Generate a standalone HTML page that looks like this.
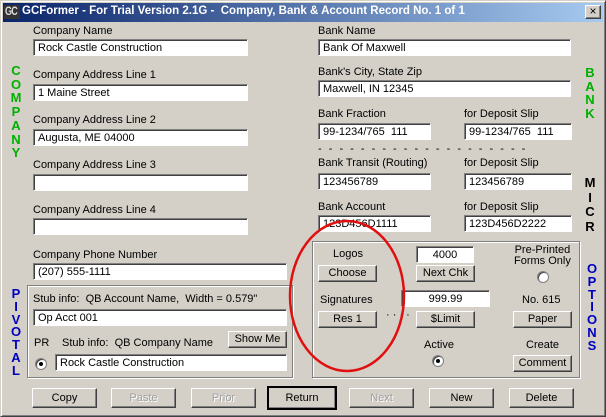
<!DOCTYPE html>
<html><head><style>
*{margin:0;padding:0;box-sizing:border-box}
body{width:606px;height:417px;background:#d4d0c8;font-family:"Liberation Sans",sans-serif;font-size:11px;color:#000;position:relative;overflow:hidden}
.a{position:absolute;white-space:nowrap}
.in{position:absolute;background:#fff;border:1px solid;border-color:#808080 #fff #fff #808080;box-shadow:inset 1px 1px 0 #404040;padding:2px 0 0 4px;font-size:11px;height:17px}
.bt{position:absolute;background:#d4d0c8;border:1px solid;border-color:#fff #404040 #404040 #fff;box-shadow:inset -1px -1px 0 #808080;text-align:center;line-height:14px;font-size:11px}
.dis{color:#a0a0a0;text-shadow:1px 1px 0 #fff}
.g{position:absolute;border:1px solid #808080;box-shadow:1px 1px 0 #fff,inset 1px 1px 0 #fff}
.v{position:absolute;font-weight:bold;font-size:13px;line-height:13px;text-align:center;width:14px}
.rad{position:absolute;width:12px;height:12px;border-radius:50%;background:#fff;border:1px solid #808080;box-shadow:inset 1px 1px 0 #404040}
.dot:after{content:"";position:absolute;left:3px;top:3px;width:4px;height:4px;border-radius:50%;background:#000}
</style></head><body>
<div class="a" style="left:0;top:0;width:606px;height:417px;border:1px solid;border-color:#d4d0c8 #404040 #404040 #d4d0c8;box-shadow:inset 1px 1px 0 #fff,inset -1px -1px 0 #808080"></div>
<div class="a" style="left:3px;top:3px;width:600px;height:19px;background:linear-gradient(90deg,#0a246a,#a6caf0)"></div>
<div class="a" style="left:4px;top:5px;width:16px;height:14px;background:#333"></div>
<div class="a" style="left:5px;top:4px;color:#ddd;font-weight:bold;font-size:12px;letter-spacing:-1px;transform:scaleX(0.75);transform-origin:left">GC</div>
<div class="a" style="left:22px;top:5px;color:#fff;font-weight:bold;font-size:11.5px">GCFormer - For Trial Version 2.1G -&nbsp; Company, Bank &amp; Account Record No. 1 of 1</div>
<div class="bt" style="left:585px;top:5px;width:16px;height:14px;line-height:11px;font-size:12px">×</div>

<div class="a" style="left:33px;top:25px">Company Name</div>
<div class="in" style="left:33px;top:39px;width:215px">Rock Castle Construction</div>
<div class="a" style="left:33px;top:69px">Company Address Line 1</div>
<div class="in" style="left:33px;top:84px;width:215px">1 Maine Street</div>
<div class="a" style="left:33px;top:114px">Company Address Line 2</div>
<div class="in" style="left:33px;top:129px;width:215px">Augusta, ME 04000</div>
<div class="a" style="left:33px;top:159px">Company Address Line 3</div>
<div class="in" style="left:33px;top:174px;width:215px"></div>
<div class="a" style="left:33px;top:204px">Company Address Line 4</div>
<div class="in" style="left:33px;top:218px;width:215px"></div>
<div class="a" style="left:33px;top:249px">Company Phone Number</div>
<div class="in" style="left:33px;top:263px;width:254px">(207) 555-1111</div>

<div class="v" style="left:9px;top:64px;color:#00b000;line-height:13.7px">C<br>O<br>M<br>P<br>A<br>N<br>Y</div>
<div class="v" style="left:9px;top:288px;color:#0000c0;line-height:12.8px">P<br>I<br>V<br>O<br>T<br>A<br>L</div>

<div class="g" style="left:27px;top:285px;width:266px;height:93px"></div>
<div class="a" style="left:33px;top:293px">Stub info:&nbsp; QB Account Name,&nbsp; Width = 0.579"</div>
<div class="in" style="left:33px;top:309px;width:254px">Op Acct 001</div>
<div class="a" style="left:34px;top:337px">PR</div>
<div class="a" style="left:62px;top:337px">Stub info:&nbsp; QB Company Name</div>
<div class="bt" style="left:228px;top:331px;width:59px;height:17px">Show Me</div>
<div class="rad dot" style="left:35px;top:358px"></div>
<div class="in" style="left:55px;top:354px;width:232px">Rock Castle Construction</div>

<div class="a" style="left:318px;top:25px">Bank Name</div>
<div class="in" style="left:318px;top:39px;width:253px">Bank Of Maxwell</div>
<div class="a" style="left:318px;top:66px">Bank's City, State Zip</div>
<div class="in" style="left:318px;top:80px;width:253px">Maxwell, IN 12345</div>
<div class="a" style="left:318px;top:108px">Bank Fraction</div>
<div class="a" style="left:464px;top:108px">for Deposit Slip</div>
<div class="in" style="left:318px;top:123px;width:113px">99-1234/765&nbsp; 111</div>
<div class="in" style="left:464px;top:123px;width:108px">99-1234/765&nbsp; 111</div>
<div class="a" style="left:318px;top:143px;letter-spacing:2px">- - - - - - - - - - - - - - - - - - - -</div>
<div class="a" style="left:318px;top:157px">Bank Transit (Routing)</div>
<div class="a" style="left:464px;top:157px">for Deposit Slip</div>
<div class="in" style="left:318px;top:173px;width:113px">123456789</div>
<div class="in" style="left:464px;top:173px;width:108px">123456789</div>
<div class="a" style="left:318px;top:201px">Bank Account</div>
<div class="a" style="left:464px;top:201px">for Deposit Slip</div>
<div class="in" style="left:318px;top:215px;width:113px">123D456D1111</div>
<div class="in" style="left:464px;top:215px;width:108px">123D456D2222</div>

<div class="v" style="left:583px;top:66px;color:#00b000;line-height:13.5px">B<br>A<br>N<br>K</div>
<div class="v" style="left:583px;top:176px;color:#000;line-height:14.5px">M<br>I<br>C<br>R</div>
<div class="v" style="left:585px;top:263px;color:#0000c0;line-height:12.8px">O<br>P<br>T<br>I<br>O<br>N<br>S</div>

<div class="g" style="left:312px;top:241px;width:268px;height:137px"></div>
<div class="a" style="left:333px;top:248px">Logos</div>
<div class="bt" style="left:318px;top:265px;width:59px;height:17px">Choose</div>
<div class="in" style="left:416px;top:246px;width:58px;text-align:center;padding-left:0">4000</div>
<div class="bt" style="left:416px;top:265px;width:59px;height:17px">Next Chk</div>
<div class="a" style="left:514px;top:245px;text-align:center;line-height:11px">Pre-Printed<br>Forms Only</div>
<div class="rad" style="left:537px;top:271px"></div>
<div class="a" style="left:320px;top:294px">Signatures</div>
<div class="in" style="left:401px;top:290px;width:89px;text-align:center;padding-left:0">999.99</div>
<div class="a" style="left:522px;top:294px">No. 615</div>
<div class="bt" style="left:318px;top:311px;width:59px;height:17px">Res 1</div>
<div class="a" style="left:386px;top:309px">· · · ·</div>
<div class="bt" style="left:416px;top:311px;width:59px;height:17px">$Limit</div>
<div class="bt" style="left:513px;top:311px;width:59px;height:17px">Paper</div>
<div class="a" style="left:424px;top:339px">Active</div>
<div class="a" style="left:526px;top:339px">Create</div>
<div class="rad dot" style="left:432px;top:355px"></div>
<div class="bt" style="left:513px;top:355px;width:59px;height:17px">Comment</div>

<svg class="a" style="left:0;top:0" width="606" height="417"><ellipse cx="347" cy="296" rx="57" ry="75" fill="none" stroke="#e01010" stroke-width="2.5"/></svg>

<div class="bt" style="left:32px;top:388px;width:65px;height:20px;line-height:18px">Copy</div>
<div class="bt dis" style="left:111px;top:388px;width:65px;height:20px;line-height:18px">Paste</div>
<div class="bt dis" style="left:191px;top:388px;width:65px;height:20px;line-height:18px">Prior</div>
<div class="bt" style="left:267px;top:386px;width:70px;height:24px;line-height:20px;border:2px solid #000">Return</div>
<div class="bt dis" style="left:349px;top:388px;width:65px;height:20px;line-height:18px">Next</div>
<div class="bt" style="left:429px;top:388px;width:65px;height:20px;line-height:18px">New</div>
<div class="bt" style="left:509px;top:388px;width:65px;height:20px;line-height:18px">Delete</div>
</body></html>
